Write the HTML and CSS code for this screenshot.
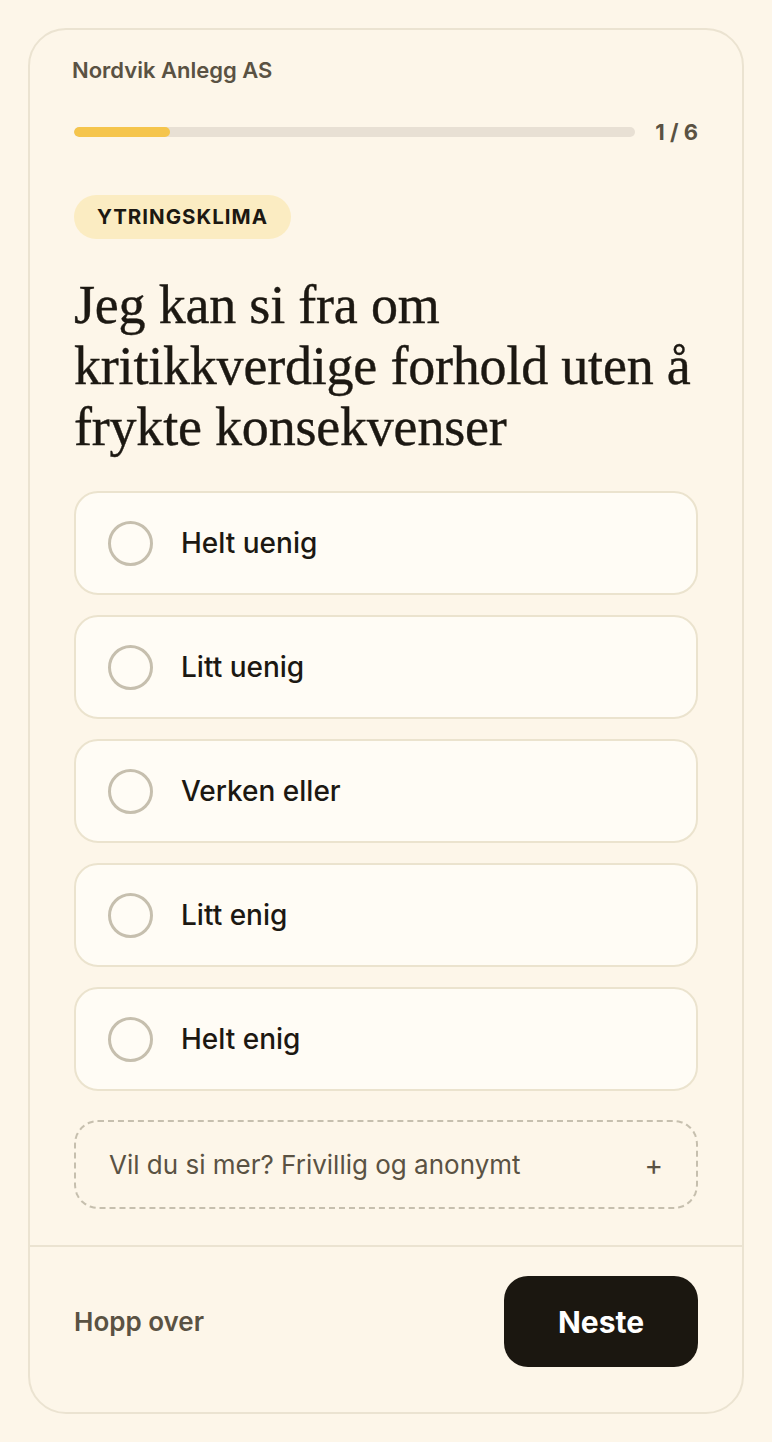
FILE: index.html
```html
<!DOCTYPE html>
<html lang="no">
<head>
<meta charset="utf-8">
<title>Nordvik Anlegg AS – Undersøkelse</title>
<link rel="stylesheet" href="styles.css">
</head>
<body>
<main class="card">
  <div class="content">
    <div class="company">Nordvik Anlegg AS</div>
    <div class="progress-row">
      <div class="track"><div class="fill" style="width:17.1%"></div></div>
      <div class="count">1 / 6</div>
    </div>
    <div class="badge">YTRINGSKLIMA</div>
    <h1 class="question">Jeg kan si fra om kritikkverdige forhold uten å frykte konsekvenser</h1>
    <div class="options">
      <div class="option"><span class="radio"></span><span class="label">Helt uenig</span></div>
      <div class="option"><span class="radio"></span><span class="label">Litt uenig</span></div>
      <div class="option"><span class="radio"></span><span class="label">Verken eller</span></div>
      <div class="option"><span class="radio"></span><span class="label">Litt enig</span></div>
      <div class="option"><span class="radio"></span><span class="label">Helt enig</span></div>
    </div>
    <div class="more"><span>Vil du si mer? Frivillig og anonymt</span><span class="plus">+</span></div>
  </div>
  <div class="footer">
    <span class="skip">Hopp over</span>
    <button class="next">Neste</button>
  </div>
</main>
</body>
</html>
```

FILE: styles.css
```css
* { box-sizing: border-box; }
html, body { margin: 0; padding: 0; }
body {
  background: #fdf6e9;
  font-family: Inter, "Open Sans", sans-serif;
  color: #1c1812;
  padding: 28px;
}
.card {
  border: 2px solid #ebe3d1;
  border-radius: 38px;
  background: #fdf6e9;
  overflow: hidden;
}
.content {
  padding: 26px 44px 36px;
}
.company {
  font-size: 22px;
  line-height: 28px;
  font-weight: 600;
  color: #5a5243;
  margin-left: -2px;
}
.progress-row {
  display: flex;
  align-items: center;
  gap: 20px;
  margin-top: 34px;
}
.track {
  flex: 1;
  height: 10px;
  border-radius: 5px;
  background: #e8e0d4;
  overflow: hidden;
}
.fill {
  height: 100%;
  background: #f5c54c;
  border-radius: 5px;
}
.count {
  font-size: 22px;
  line-height: 28px;
  font-weight: 700;
  color: #5a5243;
}
.badge {
  display: inline-block;
  margin-top: 49px;
  background: #fbecc2;
  border-radius: 22px;
  height: 44px;
  line-height: 44px;
  padding: 0 23px;
  font-size: 20.5px;
  font-weight: 700;
  letter-spacing: 1px;
  color: #1c1812;
}
.question {
  margin: 36px 0 0;
  font-family: "Liberation Serif", "DejaVu Serif", serif;
  font-weight: 400;
  font-size: 54px;
  line-height: 61px;
  color: #1c1812;
  letter-spacing: -0.2px;
  -webkit-text-stroke: 0.4px #1c1812;
}
.options {
  display: flex;
  flex-direction: column;
  gap: 20px;
  margin-top: 33px;
}
.option {
  display: flex;
  align-items: center;
  height: 104px;
  padding: 0 32px;
  background: #fffcf5;
  border: 2px solid #ebe3ce;
  border-radius: 24px;
}
.radio {
  width: 45px;
  height: 45px;
  border-radius: 50%;
  border: 3px solid #c6bfae;
  flex: none;
}
.label {
  margin-left: 28px;
  font-size: 28px;
  font-weight: 500;
  color: #1c1812;
}
.more {
  margin-top: 29px;
  height: 89px;
  border: 2px dashed #c6bfae;
  border-radius: 24px;
  display: flex;
  align-items: center;
  justify-content: space-between;
  padding: 0 33px;
  font-size: 26px;
  color: #5a5243;
}
.plus { font-size: 28px; }
.footer {
  border-top: 2px solid #ebe3d1;
  padding: 29px 44px 45px;
  display: flex;
  align-items: center;
  justify-content: space-between;
}
.skip {
  font-size: 26px;
  font-weight: 600;
  color: #5a5243;
}
.next {
  width: 194px;
  height: 91px;
  border: none;
  border-radius: 24px;
  background: #1b1710;
  color: #fff;
  font-family: inherit;
  font-size: 30px;
  font-weight: 700;
}
```
